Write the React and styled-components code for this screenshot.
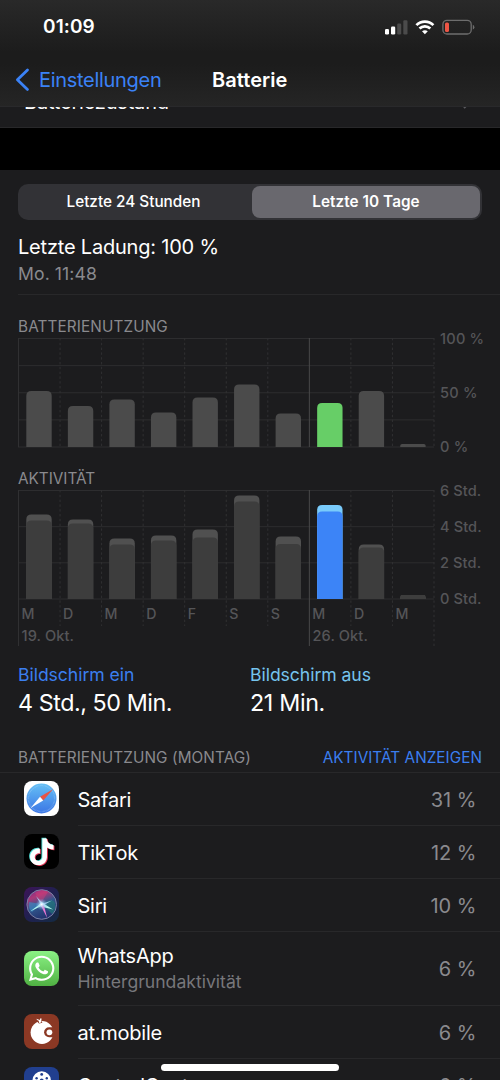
import React from 'react'
import styled, { createGlobalStyle } from 'styled-components'
import { SiTiktok } from 'react-icons/si'
import { FaWhatsapp } from 'react-icons/fa'

const GlobalStyle = createGlobalStyle`
  * {
    box-sizing: border-box;
  }

  body {
    margin: 0;
    background: #000;
    color: #fff;
    font-family: Inter, sans-serif;
    overflow: hidden;
  }
`

const Screen = styled.main`
  position: relative; // Added for the home indicator
  width: 500px;
  height: 1080px;
  overflow: hidden;
  background: #000;
  white-space: nowrap;
`

const Label = styled.span`
  display: block;
  color: ${p => p.$color || '#fff'};
  font-size: ${p => p.$size || 20}px;
  font-weight: ${p => p.$weight || 400};
  letter-spacing: ${p => p.$spacing || 0}px;
  line-height: ${p => p.$line || 24}px;
`

const Header = styled.header`
  height: 107px;
  border-bottom: 1px solid #29292b;
  background: linear-gradient(#292929 0, #1c1c1c 52px, #1c1c1c 64px, #252525 106px);
`

const StatusBar = styled.div`
  display: flex;
  align-items: center;
  justify-content: space-between;
  height: 54px;
  padding: 0 25px 0 43px;
`

const NavBar = styled.nav`
  display: grid;
  grid-template-columns: 212px 1fr;
  align-items: center;
  height: 52px;
`

const BackButton = styled.a`
  display: flex;
  align-items: center;
  gap: 8px;
  padding-left: 15px;
`

const HealthRow = styled.div`
  display: flex;
  align-items: flex-end;
  justify-content: space-between;
  height: 21px;
  padding: 0 29px 13px 24px;
  overflow: hidden;
  border-bottom: 1px solid #28282a;
  background: #1c1c1e;
`

const HealthChevron = styled.svg`
  margin-bottom: 4px;
`

const Panel = styled.section`
  height: 910px;
  margin-top: 42px;
  padding-top: 14px;
  background: #1c1c1e;
`

const Segments = styled.div`
  display: grid;
  grid-template-columns: 1fr 228px;
  height: 36px;
  margin: 0 18px;
  padding: 2px;
  border-radius: 10px;
  background: #323236;
`

const Segment = styled.button`
  display: flex;
  align-items: center;
  justify-content: center;
  padding: ${p => (p.$active ? '0' : '0 5px 0 0')};
  border: 0;
  border-radius: 8px;
  background: ${p => (p.$active ? '#69686e' : 'transparent')};
  font-family: inherit;
`

const LastCharge = styled.div`
  height: 75px;
  margin-left: 18px;
  padding-top: 15px;
  border-bottom: 1px solid #28282a;
`

const ChartBlock = styled.div`
  height: ${p => p.$height}px;
  padding: 20px 0 0 18px;
`

const ChartSvg = styled.svg`
  display: block;
  font-family: Inter, sans-serif;
  font-size: 14.6px;
  font-weight: 500;
  overflow: visible;
`

const Totals = styled.div`
  display: grid;
  grid-template-columns: 232px 1fr;
  height: 87px;
  padding: 4px 0 0 18px;
`

const ListHeader = styled.div`
  display: flex;
  justify-content: space-between;
  height: 27px;
  padding: 0 18px;
  border-bottom: 1px solid #28282a;
`

const AppRow = styled.div`
  display: flex;
  align-items: center;
  height: ${p => p.$height || 53}px;
  padding-left: 24px;
`

const AppIcon = styled.svg`
  width: 35px;
  height: 35px;
  margin-bottom: 2px;
`

const AppInfo = styled.div`
  display: flex;
  flex: 1;
  align-items: center;
  justify-content: space-between;
  height: 100%;
  margin-left: 18.5px;
  padding: ${p => (p.$tall ? '0' : '2px')} 23.5px 0 0;
  border-bottom: 1px solid #28282a;
`

const HomeIndicator = styled.div`
  position: absolute;
  bottom: 9px;
  left: 161px;
  width: 178px;
  height: 7px;
  border-radius: 4px;
  background: #fff;
`

const COLUMN = 41.55
const days = ['M', 'D', 'M', 'D', 'F', 'S', 'S', 'M', 'D', 'M']
// bar heights in px, the second chart also has the height of the screen-on part
const usage = [56, 41, 47.5, 34.5, 49.5, 62.5, 33.5, 44, 56, 3]
const activity = [
  [84.5, 78.5],
  [79.5, 75.5],
  [60.5, 54.5],
  [63.5, 58.5],
  [69.5, 61.5],
  [103.5, 97.5],
  [62.5, 55],
  [94, 87.5],
  [54.5, 51.5],
  [4, 4]
]

const barPath = (x, base, h) => {
  const r = Math.min(5, h * 0.6)
  return `M${x} ${base}v${r - h}q0 ${-r} ${r} ${-r}h${25.4 - 2 * r}q${r} 0 ${r} ${r}v${h - r}z`
}

const Grid = ({ rows, footer }) => {
  const longLine = footer ? 156 : 109
  const shortLine = footer ? 136 : 109
  return (
    <g fill='none'>
      {Array.from({ length: rows + 1 }, (_, i) => (
        <path key={i} d={`M0 ${0.5 + (108.5 / rows) * i}H416`} stroke='#2d2d2f' />
      ))}
      {Array.from({ length: 11 }, (_, i) => (
        <path
          key={i}
          d={`M${0.5 + i * COLUMN} 0V${i === 0 || i === 7 || i === 10 ? longLine : shortLine}`}
          stroke={i === 7 ? '#48484a' : '#303032'}
          strokeDasharray={i === 7 || i === 0 ? 'none' : '2.4 2.4'}
        />
      ))}
    </g>
  )
}

const UsageChart = () => (
  <ChartSvg width='482' height='110'>
    <Grid rows={4} />
    {usage.map((h, i) => (
      <path key={i} d={barPath(8.3 + i * COLUMN, 109, h)} fill={i === 7 ? '#67ce67' : '#4b4b4b'} />
    ))}
    <g fill='#555558' letterSpacing='0.2'>
      <text x='422' y='6'>100 %</text>
      <text x='422' y='60'>50 %</text>
      <text x='422' y='114'>0 %</text>
    </g>
  </ChartSvg>
)

const ActivityChart = () => (
  <ChartSvg width='482' height='158'>
    <Grid rows={3} footer />
    {activity.map(([total, on], i) => (
      <g key={i}>
        <path d={barPath(8.3 + i * COLUMN, 109, total)} fill={i === 7 ? '#79cbfb' : '#505050'} />
        <path d={barPath(8.3 + i * COLUMN, 109, on)} fill={i === 7 ? '#3c84f7' : '#3d3d3d'} />
      </g>
    ))}
    <g fill='#555558' letterSpacing='0.1'>
      <text x='422' y='6'>6 Std.</text>
      <text x='422' y='42'>4 Std.</text>
      <text x='422' y='78'>2 Std.</text>
      <text x='422' y='114'>0 Std.</text>
      {days.map((day, i) => (
        <text key={i} x={3.5 + i * COLUMN} y='129' fontSize='14.2'>{day}</text>
      ))}
      <text x='3.5' y='151'>19. Okt.</text>
      <text x='294.5' y='151'>26. Okt.</text>
    </g>
  </ChartSvg>
)

const StatusIcons = () => (
  <svg width='90' height='18' viewBox='0 0 90 18'>
    <rect x='0' y='11' width='4' height='5.5' rx='1.2' fill='#fff' />
    <rect x='6' y='8.5' width='4.2' height='8' rx='1.2' fill='#fff' />
    <rect x='12.2' y='5.5' width='4' height='11' rx='1.2' fill='#4b4b4b' />
    <rect x='18.3' y='2.2' width='4.2' height='14.3' rx='1.2' fill='#4b4b4b' />
    <g fill='none' stroke='#fff' strokeWidth='2.7'>
      <path d='M31.4 7.1a12 12 0 0 1 17 0' />
      <path d='M34.5 10.5a7.7 7.7 0 0 1 10.8 0' />
    </g>
    <path d='M37 13.3q2.9-2.3 5.8 0l-2.9 3z' fill='#fff' />
    <rect x='57.9' y='2.4' width='28.3' height='13.6' rx='4' fill='none' stroke='#6d6d6d' strokeWidth='1.3' />
    <rect x='60' y='4.4' width='4' height='9.7' rx='1.6' fill='#ed5545' />
    <path d='M87.8 6.8q1.6.7 1.6 2.4t-1.6 2.4z' fill='#6d6d6d' />
  </svg>
)

const BackChevron = () => (
  <svg width='16' height='24' fill='none' stroke='#3b82f6' strokeWidth='2.8' strokeLinecap='round' strokeLinejoin='round'>
    <path d='M12.5 2L2.4 11.7l10.1 9.7' />
  </svg>
)

const SafariIcon = () => (
  <AppIcon>
    <defs>
      <linearGradient id='safari' x2='0' y2='1'>
        <stop stopColor='#65c0f5' />
        <stop offset='1' stopColor='#3b75e5' />
      </linearGradient>
    </defs>
    <rect width='35' height='35' rx='8' fill='#fff' />
    <circle cx='17.5' cy='17.5' r='15' fill='url(#safari)' />
    <circle cx='17.5' cy='17.5' r='13.1' fill='none' stroke='#b7dcfb' strokeWidth='1.4' strokeDasharray='.5 .8' opacity='.5' />
    <path d='M29 8.3L16 15.7l3.2 3.7z' fill='#e95345' />
    <path d='M6.6 27L16 15.7l3.2 3.7z' fill='#fff' />
  </AppIcon>
)

const TikTokIcon = () => (
  <AppIcon>
    <rect width='35' height='35' rx='8' fill='#000' />
    <SiTiktok x='3.4' y='3.6' size='27' color='#55ded8' />
    <SiTiktok x='5.2' y='5' size='27' color='#e93b5a' />
    <SiTiktok x='4.3' y='4.3' size='27' color='#fff' />
  </AppIcon>
)

const SiriIcon = () => (
  <AppIcon>
    <defs>
      <linearGradient id='siriBack' y2='1'>
        <stop stopColor='#3c1457' />
        <stop offset='.5' stopColor='#202050' />
        <stop offset='1' stopColor='#132b43' />
      </linearGradient>
      <radialGradient id='siriGlow'>
        <stop stopColor='#fff' />
        <stop offset='.25' stopColor='#c9efff' stopOpacity='.8' />
        <stop offset='1' stopColor='#6797db' stopOpacity='0' />
      </radialGradient>
      <linearGradient id='siriOrb' x2='.45' y2='1'>
        <stop stopColor='#6b2a8e' />
        <stop offset='.3' stopColor='#ac3778' />
        <stop offset='.6' stopColor='#31578c' />
        <stop offset='1' stopColor='#243470' />
      </linearGradient>
    </defs>
    <rect width='35' height='35' rx='8' fill='url(#siriBack)' />
    <circle cx='17.7' cy='17.5' r='14.8' fill='url(#siriOrb)' stroke='#7b81a5' />
    <path d='M18 17Q29 10 31 16q1 8-3 11z' fill='#208078' opacity='.6' />
    <path d='M17 17L5 15q-1 7 3 10z' fill='#398bc3' opacity='.65' />
    <path d='M11 6l6 10L24 5q-7-4-13 1z' fill='#df3e77' opacity='.4' />
    <path d='M6 24.6l11-8.4 2 2zM18 15.6l11 6.8-12-3z' fill='#b4f7ef' />
    <path d='M16 17l3.4-.4 3.8 14.4z' fill='#ee79d5' />
    <path d='M17 18L12 9l7 7.6zM17 17l11-3.6-9 5z' fill='#bfd8ff' opacity='.8' />
    <circle cx='17.6' cy='17.4' r='6' fill='url(#siriGlow)' />
  </AppIcon>
)

const WhatsAppIcon = () => (
  <AppIcon>
    <defs>
      <linearGradient id='whatsapp' x2='0' y2='1'>
        <stop stopColor='#8bf285' />
        <stop offset='1' stopColor='#50b143' />
      </linearGradient>
    </defs>
    <rect width='35' height='35' rx='8' fill='url(#whatsapp)' />
    <FaWhatsapp x='3.2' y='2.9' size='29' color='#fff' />
  </AppIcon>
)

const AtMobileIcon = () => (
  <AppIcon>
    <rect width='35' height='35' rx='8' fill='#8b3824' />
    <circle cx='18' cy='18.5' r='11.4' fill='#fff' />
    <path d='M12.8 7.2l4.4-.6 1.2 2.2-3.4.8z' fill='#8b3824' />
    <path d='M12.3 4.7l3.6 1.2.1-1.5 1.6.2-.5 4-2 .4-.4-2.3q-2-.4-2.4-2z' fill='#fff' />
    <path d='M30.5 13.2h-5.4a5 5 0 0 0 0 10h5.4z' fill='#8b3824' />
    <circle cx='25.4' cy='18.3' r='2.9' fill='#fff' />
  </AppIcon>
)

const ControlIcon = () => (
  <AppIcon>
    <rect width='35' height='35' rx='8' fill='#213f8f' />
    <circle cx='17.7' cy='13.5' r='9.2' fill='#fff' />
    <g fill='#213f8f'>
      <circle cx='17.7' cy='7.4' r='1.4' />
      <circle cx='12.6' cy='11.3' r='1.2' />
      <circle cx='22.8' cy='11.3' r='1.2' />
      <circle cx='17.7' cy='13.5' r='2' />
    </g>
  </AppIcon>
)

const apps = [
  { name: 'Safari', percent: '31 %', icon: SafariIcon },
  { name: 'TikTok', percent: '12 %', icon: TikTokIcon },
  { name: 'Siri', percent: '10 %', icon: SiriIcon },
  { name: 'WhatsApp', percent: '6 %', icon: WhatsAppIcon, note: 'Hintergrundaktivität' },
  { name: 'at.mobile', percent: '6 %', icon: AtMobileIcon },
  { name: 'ControlCenter', percent: '6 %', icon: ControlIcon }
]

const App = () => {
  return (
    <Screen>
      <GlobalStyle />
      <Header>
        <StatusBar>
          <Label $weight={600} $size={19} $spacing={0.1}>01:09</Label>
          <StatusIcons />
        </StatusBar>
        <NavBar>
          <BackButton>
            <BackChevron />
            <Label $color='#3b82f6' $spacing={-0.3}>Einstellungen</Label>
          </BackButton>
          <Label $weight={600} $spacing={0.05}>Batterie</Label>
        </NavBar>
      </Header>
      <HealthRow>
        <Label $spacing={-0.2}>Batteriezustand</Label>
        <HealthChevron width='8' height='14' fill='none' stroke='#5b5b5f' strokeWidth='2'>
          <path d='M1 0l6 6L1 12' />
        </HealthChevron>
      </HealthRow>
      <Panel>
        <Segments>
          <Segment>
            <Label $size={15.3} $weight={500}>Letzte 24 Stunden</Label>
          </Segment>
          <Segment $active>
            <Label $size={15.3} $weight={600} $spacing={0.05}>Letzte 10 Tage</Label>
          </Segment>
        </Segments>
        <LastCharge>
          <Label $spacing={-0.2} $line={25}>Letzte Ladung: 100 %</Label>
          <Label $size={17.6} $color='#8a8a8e' $line={28} $spacing={0.1}>Mo. 11:48</Label>
        </LastCharge>
        <ChartBlock $height={152}>
          <Label $size={15.3} $color='#8a8a8e' $line={23} $spacing={0.12}>BATTERIENUTZUNG</Label>
          <UsageChart />
        </ChartBlock>
        <ChartBlock $height={212}>
          <Label $size={15.3} $color='#8a8a8e' $line={23}>AKTIVITÄT</Label>
          <ActivityChart />
        </ChartBlock>
        <Totals>
          <div>
            <Label $size={17.6} $color='#3b7ff0' $spacing={-0.05}>Bildschirm ein</Label>
            <Label $size={23.3} $line={32} $spacing={-0.45}>4 Std., 50 Min.</Label>
          </div>
          <div>
            <Label $size={17.6} $color='#76c4ee' $spacing={-0.05}>Bildschirm aus</Label>
            <Label $size={23.3} $line={32} $spacing={-0.35}>21 Min.</Label>
          </div>
        </Totals>
        <ListHeader>
          <Label $size={15.3} $color='#8a8a8e' $spacing={0.1}>BATTERIENUTZUNG (MONTAG)</Label>
          <Label $size={15.3} $color='#3b7ff0' $spacing={0.04}>AKTIVITÄT ANZEIGEN</Label>
        </ListHeader>
        {apps.map(({ name, percent, icon: Icon, note }) => (
          <AppRow key={name} $height={note ? 74 : 53}>
            <Icon />
            <AppInfo $tall={!!note}>
              <div>
                <Label $spacing={-0.25} $line={note ? 26 : 24}>{name}</Label>
                {note && <Label $size={17.6} $color='#77777b' $line={26}>{note}</Label>}
              </div>
              <Label $color='#8a8a8e'>{percent}</Label>
            </AppInfo>
          </AppRow>
        ))}
      </Panel>
      <HomeIndicator />
    </Screen>
  )
}

export default App
